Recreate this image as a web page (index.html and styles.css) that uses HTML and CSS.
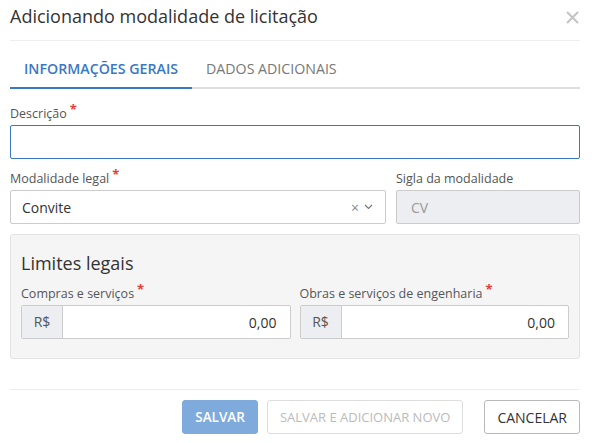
FILE: index.html
```html
<!DOCTYPE html>
<html lang="pt-BR">
<head>
<meta charset="utf-8">
<title>Adicionando modalidade de licitação</title>
<link rel="stylesheet" href="styles.css">
</head>
<body>
<div class="modal">
  <header class="modal-header">
    <h1 class="modal-title">Adicionando modalidade de licitação</h1>
    <button class="close" aria-label="Fechar">
      <svg width="13" height="13" viewBox="0 0 13 13"><path d="M1 1L12 12M12 1L1 12" stroke="#c4c4c4" stroke-width="2" fill="none"/></svg>
    </button>
  </header>

  <nav class="tabs">
    <a class="tab active">INFORMAÇÕES GERAIS</a>
    <a class="tab">DADOS ADICIONAIS</a>
  </nav>

  <div class="body">
    <div class="field">
      <label class="label">Descrição<span class="req">*</span></label>
      <input class="input focus" type="text">
    </div>

    <div class="row">
      <div class="field grow">
        <label class="label">Modalidade legal<span class="req">*</span></label>
        <div class="select">
          <span class="select-value">Convite</span>
          <span class="select-clear">×</span>
          <svg class="chev" width="9" height="6" viewBox="0 0 9 6"><path d="M1 1L4.5 4.5L8 1" stroke="#777" stroke-width="1.2" fill="none"/></svg>
        </div>
      </div>
      <div class="field sigla">
        <label class="label">Sigla da modalidade</label>
        <div class="input disabled">CV</div>
      </div>
    </div>

    <section class="panel">
      <h2 class="panel-title">Limites legais</h2>
      <div class="panel-row">
        <div class="field half">
          <label class="label">Compras e serviços<span class="req">*</span></label>
          <div class="input-group">
            <span class="addon">R$</span>
            <span class="money">0,00</span>
          </div>
        </div>
        <div class="field half">
          <label class="label">Obras e serviços de engenharia<span class="req">*</span></label>
          <div class="input-group">
            <span class="addon">R$</span>
            <span class="money">0,00</span>
          </div>
        </div>
      </div>
    </section>
  </div>

  <footer class="footer">
    <button class="btn primary">SALVAR</button>
    <button class="btn ghost">SALVAR E ADICIONAR NOVO</button>
    <button class="btn default">CANCELAR</button>
  </footer>
</div>
</body>
</html>
```

FILE: styles.css
```css
* { box-sizing: border-box; }
html, body { margin: 0; padding: 0; background: #fff; }
body {
  font-family: "Open Sans", "Liberation Sans", sans-serif;
  color: #333;
}
.modal {
  width: 570px;
  margin-left: 10px;
}
.modal-header {
  height: 41px;
  border-bottom: 1px solid #eeeeee;
  display: flex;
  align-items: flex-start;
  justify-content: space-between;
}
.modal-title {
  margin: 0;
  padding-top: 4px;
  font-size: 18px;
  font-weight: 400;
  line-height: 24px;
  color: #333;
}
.close {
  border: 0;
  background: none;
  padding: 0;
  margin: 11px -1px 0 0;
  width: 15px;
  height: 13px;
  display: flex;
}
.tabs {
  display: flex;
  margin-top: 8px;
  border-bottom: 2px solid #dcdee2;
}
.tab {
  display: block;
  font-size: 14.2px;
  line-height: 20px;
  padding: 10px 14px 8px;
  margin-bottom: -2px;
  border-bottom: 2px solid transparent;
  color: #777;
}
.tab.active {
  color: #3a78c3;
  font-weight: 600;
  border-bottom-color: #3a78c3;
}
.body {
  padding-top: 16px;
}
.field { display: flex; flex-direction: column; }
.label {
  font-size: 12.5px;
  line-height: 17px;
  color: #555;
  margin-bottom: 3px;
}
.req {
  color: #e0403a;
  font-size: 13px;
  font-weight: 700;
  position: relative;
  top: -4px;
  margin-left: 3px;
}
.input {
  height: 34px;
  border: 1px solid #ccc;
  border-radius: 2px;
  font-family: inherit;
  font-size: 14px;
  padding: 0 14px;
  display: flex;
  align-items: center;
}
.input.focus {
  border-color: #3a78c3;
  outline: none;
}
.input.disabled {
  background: #eceef1;
  color: #999;
}
.row {
  display: flex;
  gap: 10px;
  margin-top: 11px;
}
.grow { flex: 1; }
.sigla { width: 184px; }
.select {
  height: 34px;
  border: 1px solid #ccc;
  border-radius: 2px;
  display: flex;
  align-items: center;
  padding: 0 12px 0 11px;
  font-size: 14px;
  color: #333;
}
.select-value { flex: 1; }
.select-clear {
  color: #888;
  font-size: 14px;
  margin-right: 5px;
}
.chev { display: block; }
.panel {
  margin-top: 10px;
  background: #f5f5f5;
  border: 1px solid #e3e3e3;
  border-radius: 3px;
  padding: 14px 10px 19px;
}
.panel-title {
  margin: 0 0 8px;
  font-size: 18px;
  font-weight: 400;
  line-height: 28px;
  color: #333;
}
.panel-row { display: flex; gap: 9px; }
.half { flex: 1; }
.input-group {
  display: flex;
  height: 34px;
  border: 1px solid #ccc;
  border-radius: 2px;
  background: #fff;
}
.addon {
  width: 41px;
  background: #eceef1;
  border-right: 1px solid #ccc;
  color: #555;
  font-size: 14px;
  display: flex;
  align-items: center;
  justify-content: center;
  padding-bottom: 2px;
}
.money {
  flex: 1;
  display: flex;
  align-items: center;
  justify-content: flex-end;
  padding-right: 13px;
  font-size: 14px;
  color: #333;
}
.footer {
  margin-top: 30px;
  border-top: 1px solid #eeeeee;
  padding-top: 10px;
  display: flex;
  justify-content: flex-end;
}
.btn {
  height: 34px;
  font-family: inherit;
  font-size: 14px;
  border-radius: 3px;
  padding: 0 12px;
  background: #fff;
  border: 1px solid #ccc;
  color: #333;
}
.btn.primary {
  background: #7eaadc;
  border-color: #7eaadc;
  color: #fff;
  font-weight: 600;
  font-size: 13.5px;
  padding: 0 12px;
}
.btn.ghost {
  margin-left: 9px;
  border-color: #ddd;
  color: #bbb;
  font-size: 13px;
  padding: 0 12px;
}
.btn.default {
  margin-left: 21px;
  border-color: #b8b8b8;
  color: #333;
}
```
